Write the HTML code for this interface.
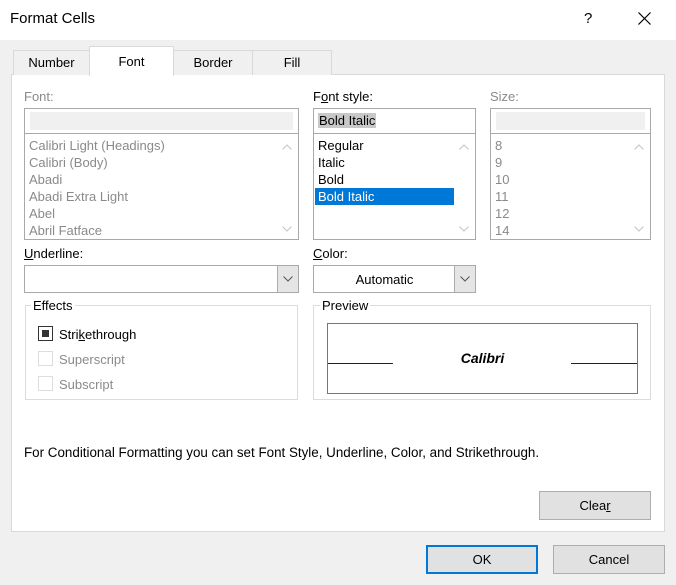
<!DOCTYPE html><html><head><style>
*{box-sizing:border-box;margin:0;padding:0}
body{width:676px;height:585px;background:#f0f0f0;font-family:"Liberation Sans",sans-serif;font-size:13px;color:#000;position:relative;overflow:hidden}
.a{position:absolute}
.box{position:absolute;border:1px solid #a9a9a9;background:#fff}
.g{color:#8a8a8a}
.tab{position:absolute;top:50px;height:25px;border:1px solid #d9d9d9;border-bottom:none;background:#f0f0f0;text-align:center;line-height:24px;font-size:13px}
.btn{position:absolute;background:#e1e1e1;border:1px solid #adadad;text-align:center;font-size:13px}
.item{position:absolute;left:4px;height:17px;line-height:17px}
.arr{position:absolute;right:6px;width:10px;height:6px}
</style></head><body>
<div class="a" style="left:0;top:0;width:676px;height:40px;background:#fff"></div>
<div class="a" style="left:10px;top:10px;font-size:15px">Format Cells</div>
<div class="a" style="left:584px;top:10px;font-size:15px">?</div>
<svg class="a" style="left:638px;top:12px" width="13" height="13"><path d="M0.5 0.5L12.5 12.5M12.5 0.5L0.5 12.5" stroke="#000" stroke-width="1.2"/></svg>
<div class="a" style="left:11px;top:74px;width:654px;height:458px;background:#fff;border:1px solid #d9d9d9"></div>
<div class="tab" style="left:13px;width:77px">Number</div>
<div class="tab" style="left:89px;top:46px;height:30px;width:85px;background:#fff;line-height:30px">Font</div>
<div class="tab" style="left:173px;width:80px">Border</div>
<div class="tab" style="left:252px;width:80px">Fill</div>

<div class="a g" style="left:24px;top:89px">Font:</div>
<div class="box" style="left:24px;top:108px;width:275px;height:26px"><div class="a" style="left:5px;top:3px;width:263px;height:18px;background:#f0f0f0"></div></div>
<div class="box g" style="left:24px;top:133px;width:275px;height:107px">
<div class="item" style="top:3px">Calibri Light (Headings)</div><div class="item" style="top:20px">Calibri (Body)</div><div class="item" style="top:37px">Abadi</div><div class="item" style="top:54px">Abadi Extra Light</div><div class="item" style="top:71px">Abel</div><div class="item" style="top:88px">Abril Fatface</div>
<svg class="arr" style="top:10px"><path d="M0.5 5.5L5 1L9.5 5.5" fill="none" stroke="#c4c4c4"/></svg><svg class="arr" style="top:92px"><path d="M0.5 0.5L5 5L9.5 0.5" fill="none" stroke="#c4c4c4"/></svg></div>

<div class="a" style="left:313px;top:89px">F<u>o</u>nt style:</div>
<div class="box" style="left:313px;top:108px;width:163px;height:26px"><span class="a" style="left:4px;top:4px;background:#c8c8c8;padding:0 1px">Bold Italic</span></div>
<div class="box" style="left:313px;top:133px;width:163px;height:107px">
<div class="item" style="top:3px">Regular</div><div class="item" style="top:20px">Italic</div><div class="item" style="top:37px">Bold</div><div class="item" style="top:54px;left:1px;width:139px;background:#0078d7;color:#fff;padding-left:3px">Bold Italic</div>
<svg class="arr" style="top:10px"><path d="M0.5 5.5L5 1L9.5 5.5" fill="none" stroke="#c4c4c4"/></svg><svg class="arr" style="top:92px"><path d="M0.5 0.5L5 5L9.5 0.5" fill="none" stroke="#c4c4c4"/></svg></div>

<div class="a g" style="left:490px;top:89px">Size:</div>
<div class="box" style="left:490px;top:108px;width:161px;height:26px"><div class="a" style="left:5px;top:3px;width:149px;height:18px;background:#f0f0f0"></div></div>
<div class="box g" style="left:490px;top:133px;width:161px;height:107px">
<div class="item" style="top:3px">8</div><div class="item" style="top:20px">9</div><div class="item" style="top:37px">10</div><div class="item" style="top:54px">11</div><div class="item" style="top:71px">12</div><div class="item" style="top:88px">14</div>
<svg class="arr" style="top:10px"><path d="M0.5 5.5L5 1L9.5 5.5" fill="none" stroke="#c4c4c4"/></svg><svg class="arr" style="top:92px"><path d="M0.5 0.5L5 5L9.5 0.5" fill="none" stroke="#c4c4c4"/></svg></div>

<div class="a" style="left:24px;top:246px"><u>U</u>nderline:</div>
<div class="box" style="left:24px;top:265px;width:275px;height:28px"><div class="a" style="right:0;top:0;width:21px;height:26px;background:#e5e5e5;border-left:1px solid #adadad"><svg class="a" style="left:5px;top:10px" width="10" height="6"><path d="M0.5 0.5L5 5L9.5 0.5" fill="none" stroke="#555"/></svg></div></div>
<div class="a" style="left:313px;top:246px"><u>C</u>olor:</div>
<div class="box" style="left:313px;top:265px;width:163px;height:28px"><div class="a" style="left:0;width:141px;top:6px;text-align:center">Automatic</div><div class="a" style="right:0;top:0;width:21px;height:26px;background:#e5e5e5;border-left:1px solid #adadad"><svg class="a" style="left:5px;top:10px" width="10" height="6"><path d="M0.5 0.5L5 5L9.5 0.5" fill="none" stroke="#555"/></svg></div></div>

<div class="a" style="left:25px;top:305px;width:273px;height:95px;border:1px solid #dcdcdc"></div>
<div class="a" style="left:31px;top:298px;background:#fff;padding:0 2px">Effects</div>
<div class="a" style="left:38px;top:326px;width:15px;height:15px;border:1px solid #333;background:#fff"><div class="a" style="left:3px;top:3px;width:7px;height:7px;background:#333"></div></div>
<div class="a" style="left:59px;top:327px">Stri<u>k</u>ethrough</div>
<div class="a" style="left:38px;top:351px;width:15px;height:15px;border:1px solid #ddd"></div>
<div class="a g" style="left:59px;top:352px">Superscript</div>
<div class="a" style="left:38px;top:376px;width:15px;height:15px;border:1px solid #ddd"></div>
<div class="a g" style="left:59px;top:377px">Subscript</div>

<div class="a" style="left:313px;top:305px;width:338px;height:95px;border:1px solid #dcdcdc"></div>
<div class="a" style="left:320px;top:298px;background:#fff;padding:0 2px">Preview</div>
<div class="a" style="left:327px;top:323px;width:311px;height:71px;border:1px solid #777"></div>
<div class="a" style="left:328px;top:363px;width:65px;height:1px;background:#222"></div>
<div class="a" style="left:571px;top:363px;width:66px;height:1px;background:#222"></div>
<div class="a" style="left:327px;top:350px;width:311px;text-align:center;font-weight:bold;font-style:italic;font-size:14px">Calibri</div>

<div class="a" style="left:24px;top:445px;font-size:13.4px">For Conditional Formatting you can set Font Style, Underline, Color, and Strikethrough.</div>
<div class="btn" style="left:539px;top:491px;width:112px;height:29px;line-height:27px">Clea<u>r</u></div>
<div class="btn" style="left:426px;top:545px;width:112px;height:29px;line-height:25px;border:2px solid #0078d7">OK</div>
<div class="btn" style="left:553px;top:545px;width:112px;height:29px;line-height:27px">Cancel</div>
</body></html>
